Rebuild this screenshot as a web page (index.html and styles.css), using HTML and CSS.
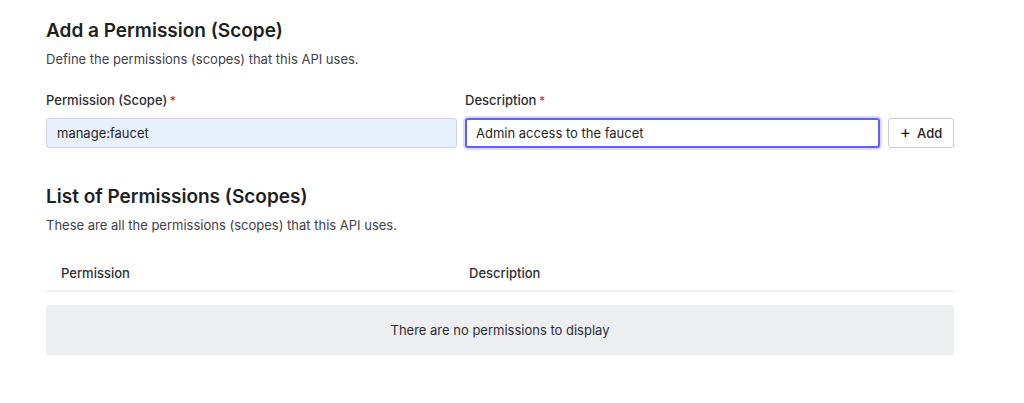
FILE: index.html
```html
<!DOCTYPE html>
<html>
<head>
<meta charset="utf-8">
<link rel="stylesheet" href="styles.css">
</head>
<body>
<main class="page">
  <section class="section">
    <h2 class="title">Add a Permission (Scope)</h2>
    <p class="sub">Define the permissions (scopes) that this API uses.</p>
    <div class="form-row">
      <div class="field scope">
        <label class="label">Permission (Scope) <span class="req">*</span></label>
        <div class="input autofill">manage:faucet</div>
      </div>
      <div class="field desc">
        <label class="label">Description <span class="req">*</span></label>
        <div class="input focused">Admin access to the faucet</div>
      </div>
      <button class="btn"><span class="plus">+</span> Add</button>
    </div>
  </section>
  <section class="section list">
    <h2 class="title">List of Permissions (Scopes)</h2>
    <p class="sub">These are all the permissions (scopes) that this API uses.</p>
    <div class="table-head">
      <div class="th">Permission</div>
      <div class="th">Description</div>
    </div>
    <div class="empty">There are no permissions to display</div>
  </section>
</main>
</body>
</html>
```
FILE: styles.css
```css
html, body {
  margin: 0;
  padding: 0;
  background: #ffffff;
}
body {
  font-family: Inter, "Noto Sans", sans-serif;
  color: #1f1f23;
}
.page {
  width: 908px;
  padding: 19px 0 0 46px;
}
.title {
  margin: 0;
  font-size: 19px;
  font-weight: 600;
  line-height: 24px;
  color: #1e1f23;
}
.sub {
  margin: 8px 0 0;
  font-size: 13px;
  line-height: 16px;
  color: #3f4149;
}
.form-row {
  display: flex;
  align-items: flex-end;
  gap: 8px;
  margin-top: 25px;
}
.field {
  display: flex;
  flex-direction: column;
}
.scope {
  width: 411px;
  flex: none;
}
.desc {
  flex: 1;
}
.label {
  font-size: 13px;
  font-weight: 500;
  line-height: 16px;
  color: #2c2d33;
  margin-bottom: 9px;
}
.req {
  color: #d0323c;
  font-size: 12px;
  margin-left: -1px;
}
.input {
  height: 30px;
  box-sizing: border-box;
  border: 1px solid #c9cace;
  border-radius: 3px;
  padding: 0 10px;
  font-size: 13px;
  line-height: 28px;
  color: #1f1f23;
}
.autofill {
  background: #e8f0fe;
  border-color: #cfd3dc;
}
.focused {
  border: 2px solid #635dff;
  padding: 0 9px;
  line-height: 26px;
  box-shadow: 0 0 0 2px #dcdafe;
}
.btn {
  width: 66px;
  height: 30px;
  box-sizing: border-box;
  border: 1px solid #c9cace;
  border-radius: 3px;
  background: #fff;
  font-family: Inter, "Noto Sans", sans-serif;
  font-size: 13px;
  font-weight: 500;
  color: #1f1f23;
  padding: 0;
  display: flex;
  align-items: center;
  justify-content: center;
  gap: 6px;
}
.plus {
  font-size: 17px;
  font-weight: 400;
  line-height: 1;
  margin-top: -1px;
}
.list {
  margin-top: 37px;
}
.table-head {
  display: grid;
  grid-template-columns: 408px 1fr;
  margin-top: 23px;
  height: 34px;
  align-items: center;
  border-bottom: 2px solid #eff0f2;
}
.th {
  font-size: 13px;
  font-weight: 500;
  color: #2c2d33;
  padding-left: 15px;
}
.empty {
  margin-top: 13px;
  height: 50px;
  background: #eceef0;
  border-radius: 3px;
  display: flex;
  align-items: center;
  justify-content: center;
  font-size: 13px;
  color: #2c2d33;
}
```
